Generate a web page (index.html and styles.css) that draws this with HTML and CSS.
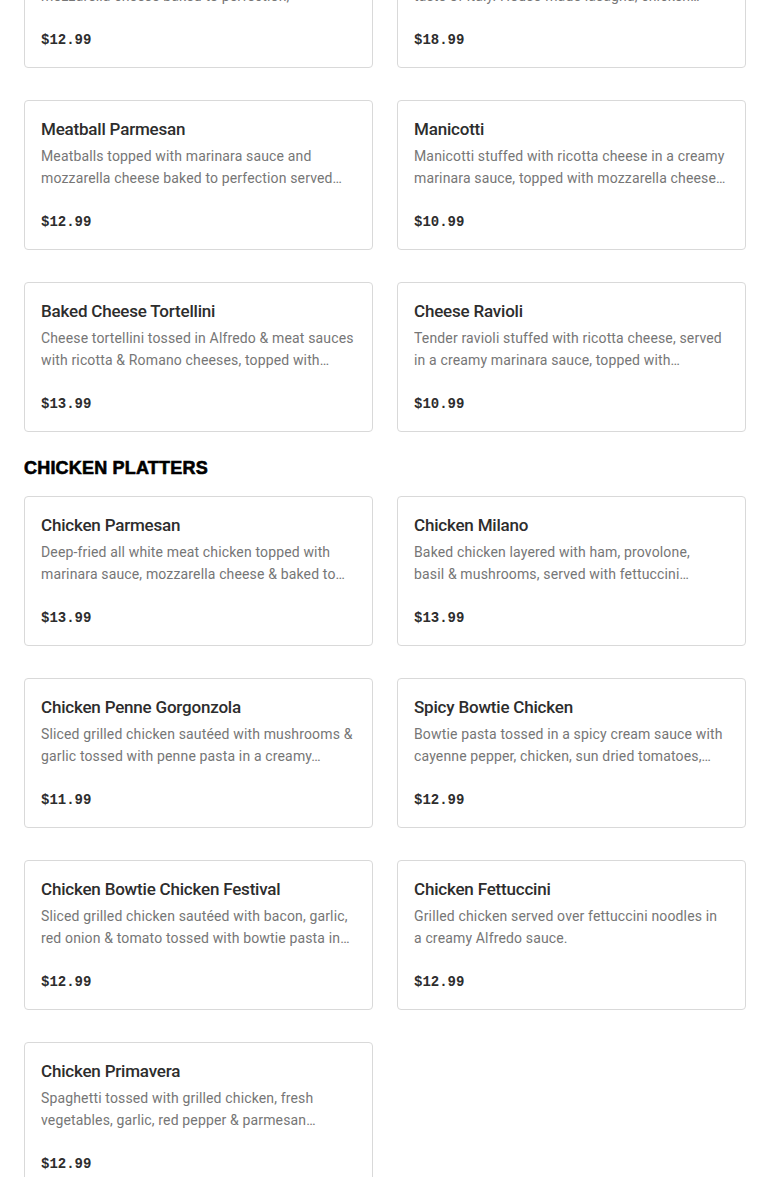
FILE: index.html
```html
<!DOCTYPE html>
<html>
<head>
 <meta charset="utf-8"/>
 <title>Menu</title>
<link rel="stylesheet" href="styles.css">
</head>
<body>
<div class="menu">

<section class="category category-first">
<div class="items">
 <div class="item">
  <h3>Eggplant Parmesan</h3>
  <p class="desc">Breaded eggplant topped with marinara sauce mozzarella cheese baked to perfection,</p>
  <div class="price">$12.99</div>
 </div>
 <div class="item">
  <h3>Tour of Italy</h3>
  <p class="desc">Enjoy our three most popular dishes for a true taste of Italy. House-made lasagna, chicken&hellip;</p>
  <div class="price">$18.99</div>
 </div>
 <div class="item">
  <h3>Meatball Parmesan</h3>
  <p class="desc">Meatballs topped with marinara sauce and mozzarella cheese baked to perfection served&hellip;</p>
  <div class="price">$12.99</div>
 </div>
 <div class="item">
  <h3>Manicotti</h3>
  <p class="desc">Manicotti stuffed with ricotta cheese in a creamy marinara sauce, topped with mozzarella cheese&hellip;</p>
  <div class="price">$10.99</div>
 </div>
 <div class="item">
  <h3>Baked Cheese Tortellini</h3>
  <p class="desc">Cheese tortellini tossed in Alfredo &amp; meat sauces with ricotta &amp; Romano cheeses, topped with&hellip;</p>
  <div class="price">$13.99</div>
 </div>
 <div class="item">
  <h3>Cheese Ravioli</h3>
  <p class="desc">Tender ravioli stuffed with ricotta cheese, served in a creamy marinara sauce, topped with&hellip;</p>
  <div class="price">$10.99</div>
 </div>
</div>
</section>

<section class="category">
<h2>CHICKEN PLATTERS</h2>
<div class="items">
 <div class="item">
  <h3>Chicken Parmesan</h3>
  <p class="desc">Deep-fried all white meat chicken topped with marinara sauce, mozzarella cheese &amp; baked to&hellip;</p>
  <div class="price">$13.99</div>
 </div>
 <div class="item">
  <h3>Chicken Milano</h3>
  <p class="desc">Baked chicken layered with ham, provolone, basil&nbsp;&amp; mushrooms, served with fettuccini&hellip;</p>
  <div class="price">$13.99</div>
 </div>
 <div class="item">
  <h3>Chicken Penne Gorgonzola</h3>
  <p class="desc">Sliced grilled chicken saut&eacute;ed with mushrooms &amp; garlic tossed with penne pasta in a creamy&hellip;</p>
  <div class="price">$11.99</div>
 </div>
 <div class="item">
  <h3>Spicy Bowtie Chicken</h3>
  <p class="desc">Bowtie pasta tossed in a spicy cream sauce with cayenne pepper, chicken, sun dried tomatoes,&hellip;</p>
  <div class="price">$12.99</div>
 </div>
 <div class="item">
  <h3>Chicken Bowtie Chicken Festival</h3>
  <p class="desc">Sliced grilled chicken saut&eacute;ed with bacon, garlic, red onion &amp; tomato tossed with bowtie pasta in&hellip;</p>
  <div class="price">$12.99</div>
 </div>
 <div class="item">
  <h3>Chicken Fettuccini</h3>
  <p class="desc">Grilled chicken served over fettuccini noodles in a&nbsp;creamy Alfredo sauce.</p>
  <div class="price">$12.99</div>
 </div>
 <div class="item">
  <h3>Chicken Primavera</h3>
  <p class="desc">Spaghetti tossed with grilled chicken, fresh vegetables, garlic, red pepper &amp; parmesan&hellip;</p>
  <div class="price">$12.99</div>
 </div>
</div>
</section>

</div>
</body>
</html>
```

FILE: styles.css
```css
body {
 margin:       0;
 background:   #ffffff;
 font-family:  Roboto, "Liberation Sans", sans-serif;
 color:        #2d2d2d;
}

.menu {
 padding:      0 24px 40px 24px;
}

/* page is scrolled: first row of cards sits above the fold */
.category-first {
 margin-top:   -82px;
}

.category h2 {
 font-family:  "Liberation Sans", Arial, sans-serif;
 font-weight:  bold;
 font-size:    18px;
 line-height:  24px;
 letter-spacing: 0.2px;
 -webkit-text-stroke: 0.6px #000000;
 color:        #000000;
 margin:       24px 0 16px 0;
}

.items {
 display:      grid;
 grid-template-columns: 1fr 1fr;
 column-gap:   24px;
 row-gap:      32px;
}

.item {
 border:       1px solid #d9d9d9;
 border-radius: 4px;
 padding:      16px;
 height:       150px;
 box-sizing:   border-box;
}

.item h3 {
 font-size:    17px;
 font-weight:  500;
 line-height:  24px;
 letter-spacing: -0.2px;
 margin:       0 0 4px 0;
 color:        #2d2d2d;
}

.desc {
 font-size:    14px;
 line-height:  22px;
 letter-spacing: 0.15px;
 color:        #767676;
 margin:       0;
 display:      -webkit-box;
 -webkit-line-clamp: 2;
 -webkit-box-orient: vertical;
 overflow:     hidden;
}

.price {
 font-family:  "Liberation Mono", "DejaVu Sans Mono", monospace;
 font-weight:  bold;
 font-size:    14px;
 line-height:  22px;
 margin-top:   22px;
 color:        #2d2d2d;
}
```
